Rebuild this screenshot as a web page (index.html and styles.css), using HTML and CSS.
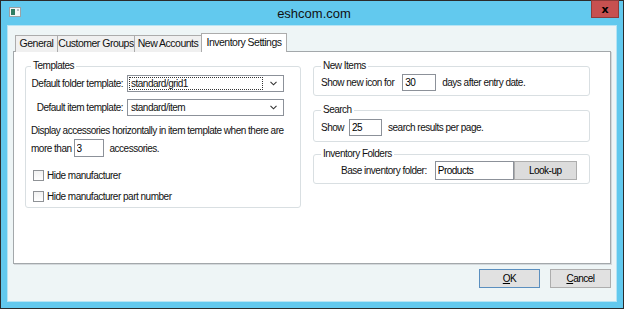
FILE: index.html
```html
<!DOCTYPE html>
<html lang="en">
<head>
    <meta charset="UTF-8">
    <meta name="viewport" content="width=device-width, initial-scale=1.0">
    <title>eshcom.com</title>
    <link rel="stylesheet" href="styles.css">
</head>
<body>

    <div class="window">
        <div class="titlebar">
            <span class="app-icon">
                <svg width="12" height="10" viewBox="0 0 12 10">
                    <rect x="0.5" y="0.5" width="11" height="9" fill="#f4f6f6" stroke="#9aa2a6"/>
                    <rect x="2" y="2" width="4" height="6" fill="#2f7d62"/>
                    <rect x="8" y="2" width="2" height="2" fill="#b9c0c4"/>
                </svg>
            </span>
            <span class="title">eshcom.com</span>
            <button class="close-btn">x</button>
        </div>

        <div class="client">
            <div class="tabs">
                <div class="tab tab-general">General</div>
                <div class="tab tab-groups">Customer Groups</div>
                <div class="tab tab-accounts">New Accounts</div>
                <div class="tab tab-active">Inventory Settings</div>
            </div>

            <div class="panel">
                <!-- left column -->
                <div class="col">
                    <fieldset class="group templates">
                        <legend>Templates</legend>
                        <div class="field-row first">
                            <label class="field-label">Default folder template:</label>
                            <div class="combo">
                                <span class="combo-text focused">standard/grid1</span>
                                <svg class="chevron" width="7" height="5" viewBox="0 0 7 5"><path d="M0.5 0.8 L3.5 3.8 L6.5 0.8" fill="none" stroke="#333" stroke-width="1.1"/></svg>
                            </div>
                        </div>
                        <div class="field-row second">
                            <label class="field-label">Default item template:</label>
                            <div class="combo">
                                <span class="combo-text">standard/item</span>
                                <svg class="chevron" width="7" height="5" viewBox="0 0 7 5"><path d="M0.5 0.8 L3.5 3.8 L6.5 0.8" fill="none" stroke="#333" stroke-width="1.1"/></svg>
                            </div>
                        </div>
                        <p class="note">Display accessories horizontally in item template when there are</p>
                        <div class="inline-row accessories">
                            <span>more than</span>
                            <input class="text-box small" type="text" value="3">
                            <span>accessories.</span>
                        </div>
                        <label class="check-row first">
                            <span class="check-box"></span>
                            Hide manufacturer
                        </label>
                        <label class="check-row">
                            <span class="check-box"></span>
                            Hide manufacturer part number
                        </label>
                    </fieldset>
                </div>

                <!-- right column -->
                <div class="col">
                    <fieldset class="group side new-items">
                        <legend>New Items</legend>
                        <div class="inline-row">
                            <span>Show new icon for</span>
                            <input class="text-box days" type="text" value="30">
                            <span>days after entry date.</span>
                        </div>
                    </fieldset>

                    <fieldset class="group side search">
                        <legend>Search</legend>
                        <div class="inline-row">
                            <span>Show</span>
                            <input class="text-box results" type="text" value="25">
                            <span>search results per page.</span>
                        </div>
                    </fieldset>

                    <fieldset class="group side folders">
                        <legend>Inventory Folders</legend>
                        <div class="inline-row folder-row">
                            <span>Base inventory folder:</span>
                            <input class="text-box folder" type="text" value="Products">
                            <button class="lookup-btn">Look-up</button>
                        </div>
                    </fieldset>
                </div>
            </div>

            <div class="dialog-buttons">
                <button class="dlg-btn default"><u>O</u>K</button>
                <button class="dlg-btn"><u>C</u>ancel</button>
            </div>
        </div>
    </div>

</body>
</html>
```

FILE: styles.css
```css
* {
    box-sizing: border-box;
}

body {
    margin: 0;
    background: #2b2b2b;
    font-family: "Liberation Sans", Arial, sans-serif;
    font-size: 10px;
    letter-spacing: -0.5px;
    color: #111;
}

.window {
    width: 624px;
    height: 309px;
    border: 1px solid #2b2b2b;
    background: #62c9ee;
    display: flex;
    flex-direction: column;
}

/* title bar */
.titlebar {
    height: 24px;
    display: grid;
    grid-template-columns: 1fr auto 1fr;
    align-items: center;
    padding: 0 4px 0 8px;
}

.app-icon {
    display: flex;
    margin-top: -2px;
}

.title {
    font-size: 13px;
    letter-spacing: 0;
    color: #111;
}

.close-btn {
    justify-self: end;
    align-self: start;
    margin-top: -1px;
    width: 28px;
    height: 18px;
    border: 1px solid #8e3b3b;
    background: #c75050;
    color: #000;
    font-family: "DejaVu Sans", sans-serif;
    font-weight: bold;
    font-size: 11px;
    line-height: 13px;
    padding: 0;
}

/* client area */
.client {
    flex: 1;
    margin: 0 6px 6px;
    background: #eef5f6;
    border: 1px solid #b7e4f4;
    padding: 7px 5px 0;
}

.tabs {
    display: flex;
    align-items: flex-end;
    height: 19px;
    margin: 0 0 -1px 2px;
    font-size: 10.5px;
}

.tab {
    height: 17px;
    border: 1px solid #acacac;
    border-bottom: none;
    background: #f0f0f0;
    text-align: center;
    line-height: 15px;
    white-space: nowrap;
}

.tab + .tab {
    margin-left: -1px;
}

.tab-general { width: 43px; }
.tab-groups { width: 78px; }
.tab-accounts { width: 68px; }

.tab-active {
    position: relative;
    z-index: 1;
    width: 86px;
    height: 19px;
    background: #fff;
    line-height: 16px;
}

.panel {
    height: 213px;
    background: #fff;
    border: 1px solid #a3a8ab;
    box-shadow: 1px 1px 0 #d4d9dc;
    display: grid;
    grid-template-columns: 276px 277px;
    column-gap: 12px;
    align-items: start;
    padding: 8px 0 0 11px;
}

.col {
    display: flex;
    flex-direction: column;
}

/* group boxes */
.group {
    margin: 0;
    min-width: 0;
    border: 1px solid #d9dfe2;
    border-radius: 3px;
    padding: 0 5px 4px;
}

.group legend {
    padding: 0 2px;
    line-height: 12px;
}

.field-row {
    display: flex;
    align-items: center;
}

.field-row.first { margin-top: 3px; }
.field-row.second { margin-top: 7px; }

.field-label {
    width: 92px;
    margin-right: 4px;
    text-align: right;
    white-space: nowrap;
}

.combo {
    width: 157px;
    height: 17px;
    border: 1px solid #8c9199;
    display: flex;
    align-items: center;
    padding: 0 2px 0 1px;
}

.combo-text {
    flex: 1;
    height: 13px;
    line-height: 11px;
    padding-left: 1px;
    border: 1px solid transparent;
}

.combo-text.focused {
    border: 1px dotted #333;
}

.chevron {
    margin: 0 4px 0 7px;
}

.note {
    margin: 8px 0 0;
    line-height: 13px;
    white-space: nowrap;
}

.inline-row {
    display: flex;
    align-items: center;
    white-space: nowrap;
}

.accessories {
    margin-top: 2px;
}

.text-box {
    font-family: inherit;
    font-size: 10px;
    letter-spacing: inherit;
    color: #000;
    border: 1px solid #8c9199;
    background: #fff;
    padding: 0 2px;
    margin: 0 6px 0 5px;
    outline: none;
}

.text-box.small { width: 30px; height: 18px; margin-left: 2px; }
.text-box.days { width: 34px; height: 17px; margin-left: 8px; }
.text-box.results { width: 33px; height: 17px; }

.check-row {
    display: flex;
    align-items: center;
    line-height: 13px;
}

.check-row.first { margin-top: 12px; }
.check-row + .check-row { margin-top: 8px; }

.check-box {
    width: 11px;
    height: 11px;
    margin: 0 3px 0 2px;
    border: 1px solid #8f9296;
    background: linear-gradient(#f2f2f2, #fff);
}

/* right column groups */
.side {
    padding: 0 5px 4px 7px;
}

.new-items .inline-row { margin-top: 2px; }

.search {
    margin-top: 8px;
    padding-bottom: 5px;
}

.search .inline-row { margin-top: 3px; }

.folders {
    margin-top: 6px;
    padding-bottom: 3px;
}

.folder-row {
    margin-top: 1px;
    padding-left: 20px;
}

.text-box.folder {
    width: 79px;
    height: 19px;
    margin: 0 0 0 8px;
}

.lookup-btn {
    width: 63px;
    height: 19px;
    font-family: inherit;
    font-size: 10px;
    letter-spacing: inherit;
    background: #dcdcdc;
    border: 1px solid #adadad;
    padding: 0;
}

/* bottom buttons */
.dialog-buttons {
    display: flex;
    justify-content: flex-end;
    gap: 10px;
    margin-top: 5px;
}

.dlg-btn {
    width: 61px;
    height: 19px;
    font-family: inherit;
    font-size: 10px;
    letter-spacing: inherit;
    background: #e1e1e1;
    border: 1px solid #adadad;
    padding: 0;
}

.dlg-btn.default {
    border-color: #5b8fbf;
}
```
